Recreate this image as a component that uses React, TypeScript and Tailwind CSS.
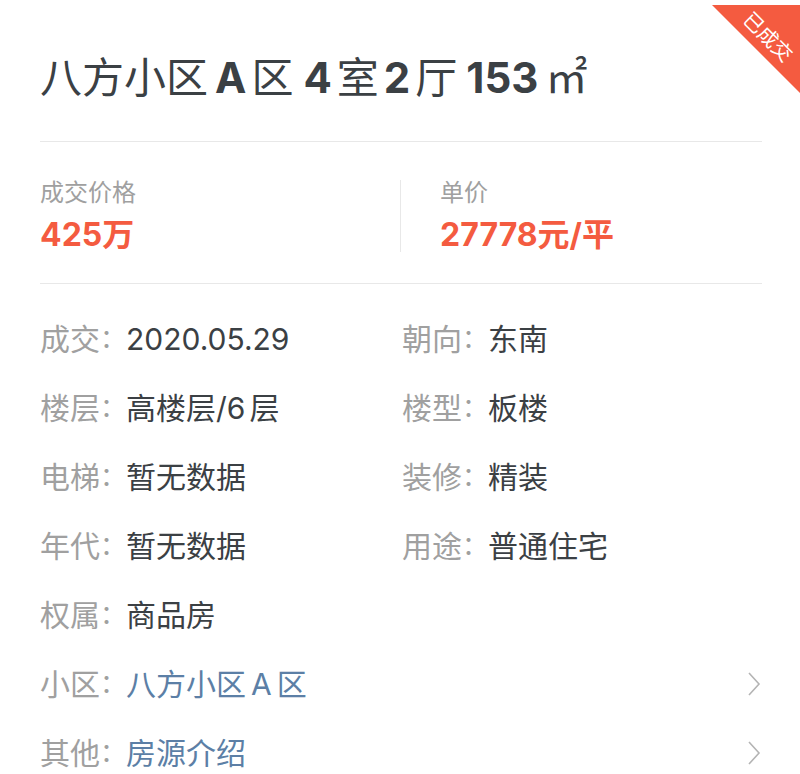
import React from "react";

const Chevron = () => (
  <svg width="16" height="26" viewBox="0 0 16 26" fill="none" className="shrink-0">
    <polyline points="3,2 13,13 3,24" stroke="#b4b4b4" strokeWidth="1.6" fill="none" />
  </svg>
);

const Colon = () => <span className="text-[26px] text-[#a0a0a0]">：</span>;

const Info = ({ label, value }: { label: string; value: React.ReactNode }) => (
  <div className="flex items-center h-[69px] text-[30px] leading-none">
    <span className="text-[#a0a0a0]">{label}</span>
    <Colon />
    <span className="text-[#3b4044]">{value}</span>
  </div>
);

const LinkRow = ({ label, value }: { label: string; value: React.ReactNode }) => (
  <div className="flex items-center justify-between h-[69px] text-[30px] leading-none">
    <div className="flex items-center">
      <span className="text-[#a0a0a0]">{label}</span>
      <Colon />
      <span className="text-[#5c7fa6]">{value}</span>
    </div>
    <Chevron />
  </div>
);

export default function App() {
  return (
    <div className="relative w-[800px] h-[774px] overflow-hidden bg-white font-['Inter','Noto_Sans_CJK_SC',sans-serif]">
      <div className="absolute top-[5px] right-0 w-[88px] h-[88px] bg-[#f45b40] [clip-path:polygon(0_0,100%_0,100%_100%)]">
        <span className="absolute left-[16px] top-[20px] w-[80px] h-[24px] rotate-45 text-white text-[20px] leading-[24px] text-center">
          已成交
        </span>
      </div>

      <div className="pl-[40px] pr-[38px]">
        <h1 className="pt-[53px] pb-[39px] flex items-center gap-[5px] text-[42px] leading-[49px] text-[#3b4044]">
          <span className="font-normal">八方小区</span>
          <span className="font-bold ml-[2px]">A</span>
          <span className="font-normal">区</span>
          <span className="font-bold ml-[5px]">4</span>
          <span className="font-normal">室</span>
          <span className="font-bold">2</span>
          <span className="font-normal">厅</span>
          <span className="font-bold ml-[4px]">153</span>
          <span className="font-normal ml-[2px]">㎡</span>
        </h1>
        <div className="h-px bg-[#e8e8e8]" />

        <div className="flex pt-[35px] pb-[28px]">
          <div className="w-[360px] flex flex-col gap-[6px]">
            <span className="text-[24px] leading-[32px] text-[#a0a0a0]">成交价格</span>
            <span className="text-[32px] leading-[40px] font-bold text-[#f45b40]">425万</span>
          </div>
          <div className="w-px bg-[#e8e8e8] my-[3px]" />
          <div className="pl-[39px] flex flex-col gap-[6px]">
            <span className="text-[24px] leading-[32px] text-[#a0a0a0]">单价</span>
            <span className="text-[32px] leading-[40px] font-bold text-[#f45b40]">27778元/平</span>
          </div>
        </div>
        <div className="h-px bg-[#e8e8e8]" />

        <div className="pt-[20px]">
          <div className="grid grid-cols-[362px_1fr]">
            <Info label="成交" value="2020.05.29" />
            <Info label="朝向" value="东南" />
            <Info
              label="楼层"
              value={
                <>
                  高楼层/6<span className="ml-[4px]">层</span>
                </>
              }
            />
            <Info label="楼型" value="板楼" />
            <Info label="电梯" value="暂无数据" />
            <Info label="装修" value="精装" />
            <Info label="年代" value="暂无数据" />
            <Info label="用途" value="普通住宅" />
            <Info label="权属" value="商品房" />
          </div>
          <LinkRow
            label="小区"
            value={
              <>
                八方小区<span className="mx-[5px]">A</span>区
              </>
            }
          />
          <LinkRow label="其他" value="房源介绍" />
        </div>
      </div>
    </div>
  );
}
